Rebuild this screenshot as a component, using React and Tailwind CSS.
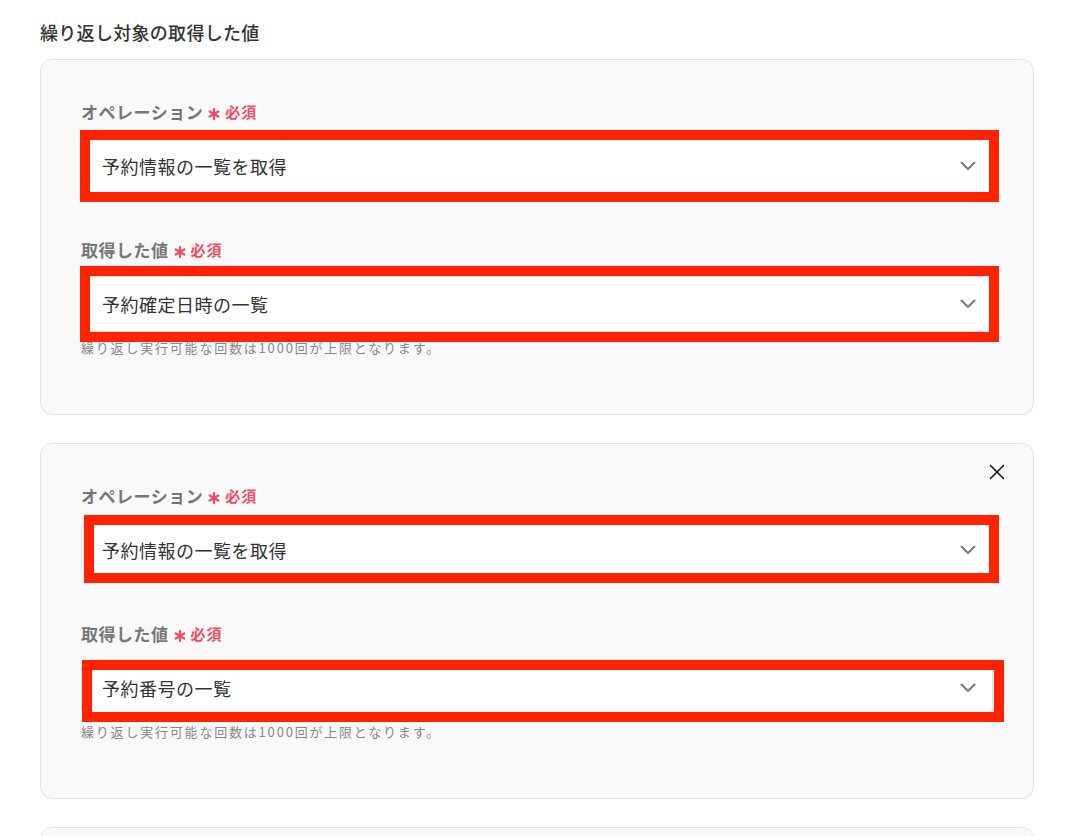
const jp = { fontFamily: '"Noto Sans CJK JP", "Noto Sans", sans-serif' }

const cards = [
  {
    closable: false,
    fields: [
      { label: 'オペレーション', value: '予約情報の一覧を取得', mark: 'left-[-2px] top-[-9px] w-[919px] h-[72px]' },
      { label: '取得した値', value: '予約確定日時の一覧', mark: 'left-[-2px] top-[-11px] w-[919px] h-[76px]', hint: true },
    ],
  },
  {
    closable: true,
    fields: [
      { label: 'オペレーション', value: '予約情報の一覧を取得', mark: 'left-[2px] top-[-8px] w-[915px] h-[68px]' },
      { label: '取得した値', value: '予約番号の一覧', mark: 'left-[0px] top-[-1px] w-[922px] h-[62px]', hint: true },
    ],
  },
]

function Chevron() {
  return (
    <svg className="w-[16px] h-[10px] shrink-0" viewBox="0 0 16 10" fill="none" stroke="#777" strokeWidth="2" strokeLinecap="round" strokeLinejoin="round">
      <polyline points="1.5,1.5 8,8 14.5,1.5" />
    </svg>
  )
}

function Asterisk() {
  return (
    <svg className="w-[12px] h-[12px] mt-[3px]" viewBox="0 0 12 12" fill="none" stroke="#f04b5e" strokeWidth="2.2" strokeLinecap="round">
      <line x1="6" y1="1" x2="6" y2="11" />
      <line x1="1.7" y1="3.5" x2="10.3" y2="8.5" />
      <line x1="1.7" y1="8.5" x2="10.3" y2="3.5" />
    </svg>
  )
}

function Field({ field, first }) {
  return (
    <div className={first ? '' : 'mt-[44px]'}>
      <div className="flex items-center h-[24px]">
        <span className="text-[17px] font-semibold text-[#777] tracking-[0.5px]">{field.label}</span>
        <span className="ml-[5px] flex items-center gap-[5px]">
          <Asterisk />
          <span className="text-[15px] font-semibold text-[#f04b5e] tracking-[1px]">必須</span>
        </span>
      </div>
      <div className="relative mt-[14px] h-[56px] rounded-[8px] border border-[#e2e2e2] bg-white flex items-center justify-between pl-[20px] pr-[16px]">
        <span className="text-[18px] text-[#333] tracking-[0.5px]">{field.value}</span>
        <Chevron />
        {field.mark && <div className={`absolute border-[10px] border-[#ff2300] ${field.mark}`} />}
      </div>
      {field.hint && (
        <p className="mt-[7px] h-[18px] leading-[18px] text-[13px] text-[#888] tracking-[1.8px]">
          繰り返し実行可能な回数は1000回が上限となります。
        </p>
      )}
    </div>
  )
}

export default function App() {
  return (
    <div className="h-[836px] overflow-hidden bg-white px-[40px] pt-[18px]" style={jp}>
      <h2 className="h-[28px] leading-[28px] text-[18px] font-medium text-[#333] tracking-[0.3px]">繰り返し対象の取得した値</h2>
      <div className="mt-[13px] w-[994px] flex flex-col gap-[28px]">
        {cards.map((card, i) => (
          <div key={i} className="rounded-[12px] border border-[#e2e2e2] bg-[#f9f9f9] px-[40px] pt-[16px] pb-[57px]">
            <div className="h-[24px] flex items-center justify-end mr-[-12px]">
              {card.closable && (
                <svg className="w-[16px] h-[16px]" viewBox="0 0 16 16" fill="none" stroke="#222" strokeWidth="1.7" strokeLinecap="round">
                  <line x1="1.5" y1="1.5" x2="14.5" y2="14.5" />
                  <line x1="14.5" y1="1.5" x2="1.5" y2="14.5" />
                </svg>
              )}
            </div>
            {card.fields.map((f, j) => (
              <Field key={j} field={f} first={j === 0} />
            ))}
          </div>
        ))}
        {/* next card, only its top edge is in view */}
        <div className="h-[356px] shrink-0 rounded-[12px] border border-[#e2e2e2] bg-[#f9f9f9]" />
      </div>
    </div>
  )
}
